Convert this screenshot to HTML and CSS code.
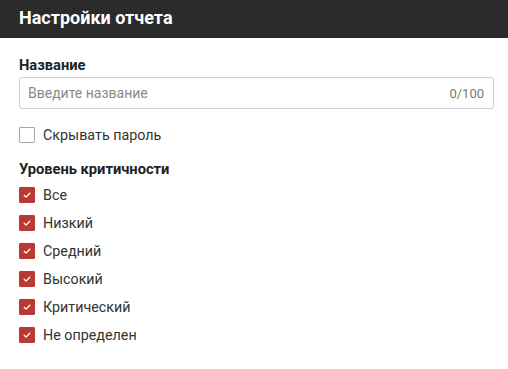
FILE: index.html
```html
<!DOCTYPE html>
<html lang="ru">
<head>
<meta charset="utf-8">
<link rel="stylesheet" href="styles.css">
</head>
<body>
<div class="panel">
  <div class="header">Настройки отчета</div>
  <div class="content">
    <div class="label">Название</div>
    <div class="input">
      <span class="placeholder">Введите название</span>
      <span class="counter">0/100</span>
    </div>
    <div class="row first">
      <span class="box"></span><span class="text">Скрывать пароль</span>
    </div>
    <div class="label section">Уровень критичности</div>
    <div class="list">
      <div class="row"><span class="box checked"><svg viewBox="0 0 16 16"><path d="M4.8 8.2l2.2 2.2 4.2-4.4" fill="none" stroke="#fff" stroke-width="1.5" stroke-linecap="round" stroke-linejoin="round"/></svg></span><span class="text">Все</span></div>
      <div class="row"><span class="box checked"><svg viewBox="0 0 16 16"><path d="M4.8 8.2l2.2 2.2 4.2-4.4" fill="none" stroke="#fff" stroke-width="1.5" stroke-linecap="round" stroke-linejoin="round"/></svg></span><span class="text">Низкий</span></div>
      <div class="row"><span class="box checked"><svg viewBox="0 0 16 16"><path d="M4.8 8.2l2.2 2.2 4.2-4.4" fill="none" stroke="#fff" stroke-width="1.5" stroke-linecap="round" stroke-linejoin="round"/></svg></span><span class="text">Средний</span></div>
      <div class="row"><span class="box checked"><svg viewBox="0 0 16 16"><path d="M4.8 8.2l2.2 2.2 4.2-4.4" fill="none" stroke="#fff" stroke-width="1.5" stroke-linecap="round" stroke-linejoin="round"/></svg></span><span class="text">Высокий</span></div>
      <div class="row"><span class="box checked"><svg viewBox="0 0 16 16"><path d="M4.8 8.2l2.2 2.2 4.2-4.4" fill="none" stroke="#fff" stroke-width="1.5" stroke-linecap="round" stroke-linejoin="round"/></svg></span><span class="text">Критический</span></div>
      <div class="row"><span class="box checked"><svg viewBox="0 0 16 16"><path d="M4.8 8.2l2.2 2.2 4.2-4.4" fill="none" stroke="#fff" stroke-width="1.5" stroke-linecap="round" stroke-linejoin="round"/></svg></span><span class="text">Не определен</span></div>
    </div>
  </div>
</div>
</body>
</html>
```
FILE: styles.css
```css
html, body {
  margin: 0;
  padding: 0;
  background: #fff;
}
body {
  font-family: Roboto, "Liberation Sans", Arial, sans-serif;
  color: #333;
  width: 508px;
  height: 369px;
  overflow: hidden;
}
.header {
  height: 38px;
  background: #2b2b2b;
  color: #fff;
  font-size: 18px;
  font-weight: 700;
  line-height: 36px;
  padding-left: 19px;
  box-sizing: border-box;
}
.content {
  padding: 17px 14px 0 19px;
}
.label {
  font-size: 14.7px;
  font-weight: 700;
  line-height: 20px;
  color: #222;
}
.input {
  margin-top: 2px;
  height: 32px;
  border: 1px solid #c8d0dc;
  border-radius: 3px;
  box-sizing: border-box;
  display: flex;
  align-items: center;
  justify-content: space-between;
  padding: 0 9px 0 8px;
  font-size: 14px;
}
.placeholder {
  color: #8a8a8a;
}
.counter {
  color: #777;
  font-size: 13px;
}
.row {
  display: flex;
  align-items: center;
  height: 28px;
  font-size: 14.3px;
  color: #333;
}
.row.first {
  margin-top: 12px;
}
.section {
  margin-top: 10px;
}
.list {
  margin-top: 2px;
}
.box {
  width: 16px;
  height: 16px;
  box-sizing: border-box;
  border: 1px solid #a8a8a8;
  border-radius: 1px;
  margin-right: 8px;
  display: flex;
  flex-shrink: 0;
}
.box.checked {
  background: #b83a32;
  border-color: #b83a32;
}
.box svg {
  width: 14px;
  height: 14px;
}
```
